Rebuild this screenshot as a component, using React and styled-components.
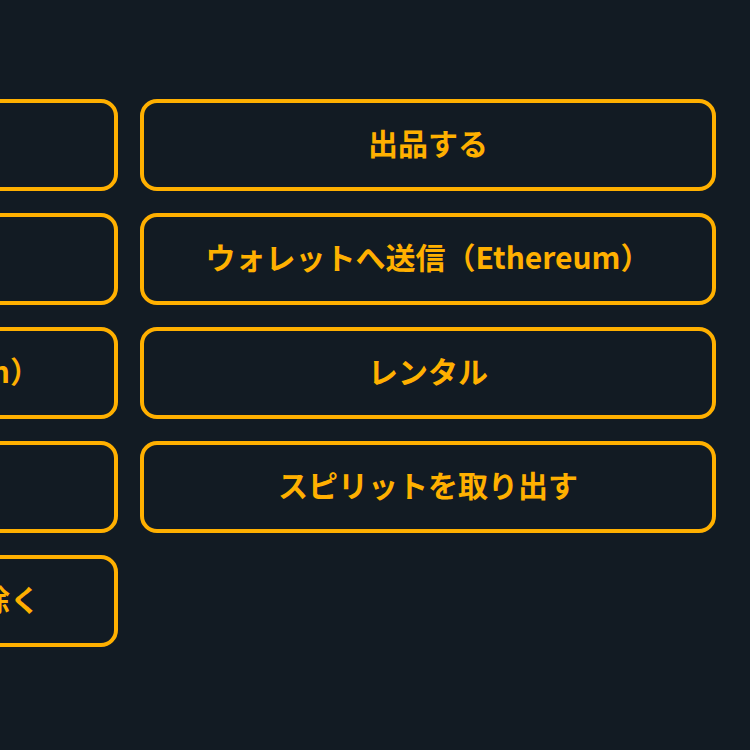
import React from "react";
import styled, { createGlobalStyle } from "styled-components";

const Global = createGlobalStyle`
  html, body {
    margin: 0;
    padding: 0;
    background: #121b23;
  }
  body {
    font-family: "Noto Sans CJK JP", "Noto Sans", sans-serif;
    overflow: hidden;
  }
`;

const Page = styled.div`
  width: 750px;
  height: 750px;
  overflow: hidden;
  background: #121b23;
  padding-top: 99px;
  box-sizing: border-box;
`;

const ActionGrid = styled.div`
  display: grid;
  grid-template-columns: 576px 576px;
  column-gap: 22px;
  row-gap: 22px;
  margin-left: -458px;
  width: 1174px;
`;

const ActionButton = styled.button`
  height: 92px;
  box-sizing: border-box;
  border: 4px solid #ffb000;
  border-radius: 17px;
  background: transparent;
  color: #ffb000;
  font-family: "Noto Sans CJK JP", "Noto Sans", sans-serif;
  font-weight: 700;
  font-size: 30px;
  line-height: 1;
  display: flex;
  align-items: center;
  justify-content: center;
  white-space: nowrap;
  padding: 0 0 6px;
  cursor: pointer;
`;

const actions = [
  "購入する",
  "出品する",
  "オファーする",
  "ウォレットへ送信（Ethereum）",
  "ウォレットへ送信（Polygon）",
  "レンタル",
  "転送する",
  "スピリットを取り出す",
  "お気に入りリストから取り除く",
];

export default function App() {
  return (
    <>
      <Global />
      <Page>
        <ActionGrid>
          {actions.map((label) => (
            <ActionButton key={label}>{label}</ActionButton>
          ))}
        </ActionGrid>
      </Page>
    </>
  );
}
